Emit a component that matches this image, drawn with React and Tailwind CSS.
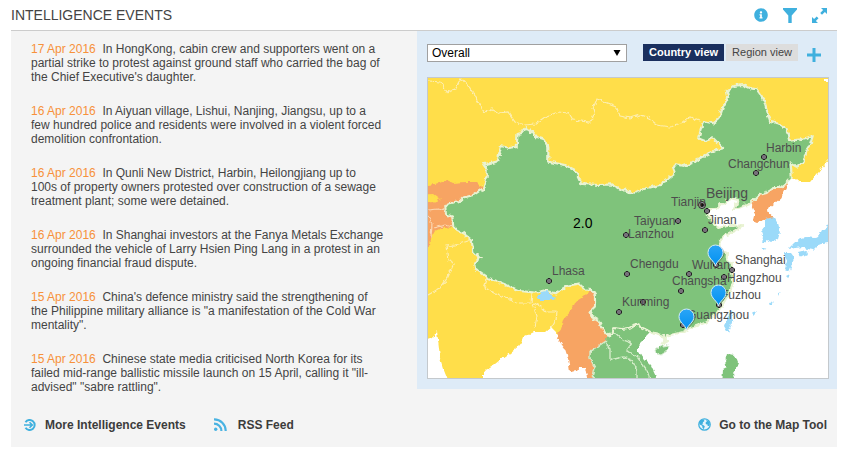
import { useState } from "react";
import { FaInfoCircle } from "react-icons/fa";

const EVENTS = [
    { date: "17 Apr 2016", text: "In HongKong, cabin crew and supporters went on a partial strike to protest against ground staff who carried the bag of the Chief Executive's daughter." },
    { date: "16 Apr 2016", text: "In Aiyuan village, Lishui, Nanjing, Jiangsu, up to a few hundred police and residents were involved in a violent forced demolition confrontation." },
    { date: "16 Apr 2016", text: "In Qunli New District, Harbin, Heilongjiang up to 100s\u00a0of property owners protested over construction of a sewage treatment plant; some were detained." },
    { date: "16 Apr 2016", text: "In Shanghai investors at the Fanya Metals Exchange surrounded the vehicle of Larry Hsien Ping Lang in a protest in an ongoing financial fraud dispute." },
    { date: "15 Apr 2016", text: "China's defence ministry said the strengthening of the Philippine military alliance is \"a manifestation of the Cold War mentality\"." },
    { date: "15 Apr 2016", text: "Chinese state media criticised North Korea for its failed mid-range ballistic missile launch on 15 April, calling it \"ill-advised\" \"sabre rattling\"." },
];

const CITIES = [
    { name: "Harbin", x: 766, y: 152 },
    { name: "Changchun", x: 728, y: 168 },
    { name: "Tianjin", x: 671, y: 206 },
    { name: "Jinan", x: 708, y: 224 },
    { name: "Taiyuan", x: 634, y: 225 },
    { name: "Lanzhou", x: 628, y: 238 },
    { name: "Chengdu", x: 630, y: 268 },
    { name: "Wuhan", x: 692, y: 269 },
    { name: "Shanghai", x: 735, y: 264 },
    { name: "Changsha", x: 672, y: 285 },
    { name: "Hangzhou", x: 727, y: 282 },
    { name: "Fuzhou", x: 721, y: 299 },
    { name: "Guangzhou", x: 687, y: 319 },
    { name: "Kunming", x: 622, y: 306 },
    { name: "Lhasa", x: 552, y: 275 },
];

const DOTS = [
    [764, 157], [756, 173], [707, 211], [705, 230], [678, 221], [626, 235],
    [627, 274], [549, 281], [619, 312], [643, 302], [681, 291], [689, 274],
    [732, 270], [724, 277], [719, 305], [683, 325], [716, 265],
];

const PINS = [[715.5, 266], [718.5, 306], [686.5, 330]];

const CHINA =
    "M526 127L521 133L517.5 134L516.7 147L509 148L501 146L497.3 161.7L483.3 164.3L486.7 169L486.7 177L483.3 188.3L473.3 195L463.3 197.7L460 201L448.3 203.3L445.3 207L446 214L452.3 216.7L453.3 227.7L463 233L471.7 240L473.3 251.7L480 258.3L474 262.3L475 268.3L488.3 277.7L506.7 285L520 291L535 292.7L544 290.7L556.7 293.3L566.7 286L580 283.3L583.3 289.3L591.7 290L595 295L595 305L590 315L598.3 320L601 326.7L608.3 335.7L613 333L613.3 328L622 329L630 327.7L635 324.3L643.3 328.3L650 331.7L662 335L664.7 340L661.7 344L667 341L666 336L683.3 332L690 328.3L706.7 322.3L716.7 313.3L723.3 303.3L730 291.7L733.3 281.7L731.7 270L732 264L726.7 258.3L727 253L720 250L719.3 242L724 236L738 229L743 225L733 226L727 226L718.3 228L714 223L708 215L707 209L716 209L721 204L726 203L730 198L738 200L736 205L734 209L742 207L751 203L759 195L766.7 193L773 188L780 188L785.7 183.3L791.7 177L790.7 163.3L796.7 166.7L803 163.3L806.7 150L810 145L812.7 136L801.7 139.3L789.3 140.7L786.7 130L780 124L770 121.7L766 108L763.3 98.3L756.7 89.3L750 88L743.3 85L733 86L726.7 91L728.3 97L723 107L719.3 118.3L713.3 123.3L703.3 121L698.3 138.3L705 141L713.3 138.3L717 142L723.3 148.3L713.3 151L705 155L691.7 163.3L684 166L675 164L673 168L675 173.3L668 179L660 185L647 188L633.3 192.7L620 189.3L611.7 184.3L600 185L581.7 184L575 170L565 165L548.3 161.7L548.3 147L543.3 139.3L536 137L531.7 131.7Z";

function RiskMap() {
    return (
        <svg viewBox="428 78 400 300" role="img" aria-label="Risk map of China" className="block w-full bg-white">
            <defs>
                <filter id="rough" x="0" y="0" width="1" height="1" colorInterpolationFilters="sRGB">
                    <feTurbulence type="fractalNoise" baseFrequency="0.22" numOctaves="2" seed="4" result="noise" />
                    <feDisplacementMap in="SourceGraphic" in2="noise" scale="5" xChannelSelector="R" yChannelSelector="G" />
                </filter>
                <linearGradient id="pin" x1="0" y1="0" x2="0" y2="1">
                    <stop offset="0" stopColor="#2aa5f7" />
                    <stop offset="1" stopColor="#0090f0" />
                </linearGradient>
            </defs>

            <g filter="url(#rough)">
                {/* keeps the filtered area larger than the visible one */}
                <rect x="418" y="68" width="420" height="320" fill="#fff" />

                {/* yellow: Russia, Mongolia, Kazakhstan, India */}
                <path fill="#ffde4a" d="M418 68H838V150L828 160L818 173L810 182L802 182L792 178L770 165L620 260L596 292L575 320L559 339L556 332L551 327L545 332L533 332L523 337L520 345L510 353L500 360L490 368L483 372L483 388H450L447 378L443 368L440 358L437 331L433 337L418 342Z" />

                {/* orange: Kyrgyzstan, Tajikistan, Myanmar, North Korea */}
                <path fill="#f7a463" d="M418 187L428 185L435 184L447 180L453 183L465 182L477 182L483 188L484 200L455 225L453 228L444 227L435 231L431 238L430 246L418 250Z" />
                <path fill="#ffde4a" d="M418 195L434 194L441 199L433 202L418 203Z" />
                <path fill="#f7a463" d="M590 290L600 295L610 335L606 341L597 347L590 351L591 358L595 368L592 388H589L585 367L580 367L577 371L570 372L568 358L565 349L557 338L563 320L571 311L575 302L583 297Z" />
                <path fill="#f7a463" d="M751 203L759 195L767 193L773 188L780 188L788 181L786 188L781 198L775 203L768 209L769 213L775 218L766 219L758 222L753 220L755 212Z" />

                {/* green: Vietnam, Laos, Thailand, Philippines, Hainan */}
                <path fill="#7fc37b" d="M606 341L608 333L614 326L645 326L650 333L644 339L638 345L638 351L644 359L651 366L657 379V388H592L595 368L590 358L591 351L597 347Z" />
                <path fill="#7fc37b" d="M727 354L735 355L738 363L735 370L733 373L735 388H722L723 369L727 367L725 361Z" />
                <path fill="#7fc37b" stroke="#d9edd3" d="M656 350L662 346L669 345L667 351L661 355L657 354Z" />

                {/* light blue: Korea, Japan, Taiwan */}
                <g fill="#9bdaf9">
                    <path d="M765 219L774 217L778 224L780 232L778 239L772 242L768 240L762 245L763 236L761 232L765 227Z" />
                    <path d="M784 253L791 253L794 257L792 265L789 272L785 269L787 261Z" />
                    <path d="M788 249L794 243L800 238L807 237L815 238L819 236L822 230L828 226L838 220V241L828 243L822 244L817 246L813 250L808 249L803 247L795 248Z" />
                    <path d="M798 252L806 250L808 254L800 258Z" />
                    <path d="M731 311L734 315L731 326L728 333L724 326L727 317Z" />
                    <path d="M761 248L766 247L764 250Z M786 276L790 274L788 278Z M769 305L773 300L772 304Z M752 313L757 312L754 315Z M778 293L781 291L779 295Z" />
                </g>

                <path fill="#7fc37b" stroke="#e9f3d3" strokeWidth="2.2" strokeLinejoin="round" d={CHINA} />
                {/* Bhutan */}
                <path fill="#9bdaf9" d="M537 297L541 292L546 291L550 294L555 297L554 300L546 300L539 300Z" />

                <g fill="none" stroke="#fdeeb0" strokeWidth="1.2">
                    <path d="M418 80L440 82L446 92L455 89L461 78L470 88L478 102L484 112L492 109L499 113L508 112L515 122L524 125L535 124L545 117L558 112L569 113L573 120L590 122L594 113L593 108L597 99L608 103L616 106L620 116L630 118L640 115L649 118L657 125L670 127L681 124L690 117L700 121" />
                    <path d="M471 240L462 243L455 245L446 246L448 260L454 263L448 277L440 288L428 295" />
                    <path d="M488 277L484 288L495 293L506 298L520 303L531 303L532 293" />
                    <path d="M532 302L540 306L546 312L557 312L556 320L552 327M533 304L537 316L535 328" />
                </g>
                <g fill="none" stroke="#fbd9b5" strokeWidth="1.2">
                    <path d="M428 210L438 209L446 211M428 216L432 224L431 238M434 228L446 225L453 227" />
                </g>
                <g fill="none" stroke="#d5ecc9" strokeWidth="1.4">
                    <path d="M606 341L597 347L590 351L590 358L595 368L593 378" />
                    <path d="M614 332L623 340L632 343L627 350L638 358L647 370L650 380" />
                    <path d="M606 342L610 350L610 360L623 357L632 360L637 370L637 380" />
                </g>
            </g>

            <path d="M824 79h4v3h-2v-1h-2z" fill="#fff" />

            <g fill="#77717a" stroke="#222" strokeWidth="1">
                {DOTS.map(([x, y]) => (
                    <path key={`${x}-${y}`} d={`M${x - 1} ${y - 2.5}h2l1.5 1.5v2l-1.5 1.5h-2l-1.5 -1.5v-2z`} />
                ))}
            </g>
            <circle cx="702" cy="205" r="3.5" fill="#aaa" stroke="#222" />
            <circle cx="702" cy="205" r="2" fill="#111" />

            <g fill="#4d4d4d" fontSize="12" fontFamily="Liberation Sans, Arial, sans-serif">
                {CITIES.map((city) => (
                    <text key={city.name} x={city.x} y={city.y}>{city.name}</text>
                ))}
                <text x="706" y="198" fontSize="14">Beijing</text>
                <text x="573" y="228" fontSize="14" fill="#000">2.0</text>
            </g>

            {PINS.map(([x, y]) => (
                <g key={x} transform={`translate(${x} ${y})`}>
                    <path d="M1 1C1 -4 9 -7 9 -13A7.5 7.5 0 0 0 2 -20Z" fill="#000" opacity="0.3" />
                    <path d="M0 0C-1 -5 -7.5 -7.5 -7.5 -13.5A7.5 7.5 0 0 1 7.5 -13.5C7.5 -7.5 1 -5 0 0Z" fill="url(#pin)" stroke="#d4ecf8" strokeWidth="1" />
                </g>
            ))}
        </svg>
    );
}

function FilterIcon() {
    return (
        <svg viewBox="0 0 14 15" className="w-3.5 h-[15px]" fill="#3fb0de">
            <path d="M0 0H14V1.5L8.7 7.5V15H5.3V7.5L0 1.5Z" />
        </svg>
    );
}

function ExpandIcon() {
    return (
        <svg viewBox="0 0 15 15" className="w-[15px] h-[15px]" fill="#3fb0de">
            <path d="M9 0H15V6L12.9 3.9L10 6.8L8.2 5L11.1 2.1ZM6 15H0V9L2.1 11.1L4.7 8.5L6.5 10.3L3.9 12.9Z" />
        </svg>
    );
}

function ArrowCircleIcon() {
    return (
        <svg viewBox="0 0 12 12" className="w-3 h-3" fill="none" stroke="#3fb0de">
            <path d="M1.5 3.2A5 5 0 1 1 1.5 8.8" strokeWidth="2" />
            <path d="M0 6H8M5.5 3.2L8.3 6L5.5 8.8" strokeWidth="1.6" />
        </svg>
    );
}

function RssIcon() {
    return (
        <svg viewBox="0 0 13 13" className="w-[13px] h-[13px]" fill="none" stroke="#4ab3e2" strokeWidth="2.2">
            <path d="M0 1.3A11.5 11.5 0 0 1 11.7 13M0 5.6A7.4 7.4 0 0 1 7.4 13" />
            <circle cx="1.7" cy="11.3" r="1.7" fill="#4ab3e2" stroke="none" />
        </svg>
    );
}

function GlobeIcon() {
    return (
        <svg viewBox="0 0 13 13" className="w-[13px] h-[13px]">
            <circle cx="6.5" cy="6.5" r="5.7" fill="#e6f4fb" stroke="#3fb0de" strokeWidth="1.3" />
            <path fill="#3fb0de" d="M1.2 4L3 2L6 1.5L6.3 3.2L4.8 4.2L5.2 5.5L3.6 6L5.5 7.2L6.8 8.2L5.8 11.3L4.4 9.5L4.2 7.8L1.6 6.5ZM8 1.8L11 3.4L11.8 6.4L11 8L9.7 8L9.5 6.5L8 6.3L7.5 4.8L8.8 3.6Z" />
        </svg>
    );
}

export default function App() {
    const [indicator, setIndicator] = useState("Overall");
    const [view, setView] = useState("country");

    return (
        <div className="min-h-screen bg-white pl-[11px] pr-[15px] font-['Liberation_Sans',Arial,sans-serif] text-xs text-[#444]">
            {/* HEADER */}
            <header className="flex items-center justify-between h-[31px] border-b border-[#ccc] pr-2.5">
                <h1 className="text-sm">INTELLIGENCE EVENTS</h1>
                <div className="flex items-center gap-[15px] text-[#3fb0de]">
                    <button aria-label="Information"><FaInfoCircle size={14} /></button>
                    <button aria-label="Filter"><FilterIcon /></button>
                    <button aria-label="Expand"><ExpandIcon /></button>
                </div>
            </header>

            <main className="grid grid-cols-[406fr_420fr] items-start bg-[#f4f4f4]">
                {/* EVENTS */}
                <ul className="min-w-0 flex flex-col gap-5 pl-5 pr-[31px] pt-[11px] leading-[14px]">
                    {EVENTS.map((event) => (
                        <li key={event.text}>
                            <span className="text-[#f7913a]">{event.date}</span>
                            {"\u00a0 "}
                            {event.text}
                        </li>
                    ))}
                </ul>

                {/* MAP */}
                <section className="min-w-0 bg-[#deebf7] pl-2.5 pr-2 pt-[13px] pb-2.5">
                    <div className="flex items-start mb-[15px]">
                        <div className="relative w-[200px]">
                            <select
                                aria-label="Indicator"
                                value={indicator}
                                onChange={(e) => setIndicator(e.target.value)}
                                className="block w-full h-[18px] appearance-none border border-[#a0a0a0] bg-white pl-1 text-xs leading-4 text-black"
                            >
                                <option>Overall</option>
                            </select>
                            <svg viewBox="0 0 8 6" className="absolute right-1.5 top-1.5 w-2 h-1.5 pointer-events-none">
                                <path d="M0.5 0H7.5L4 6Z" fill="#000" />
                            </svg>
                        </div>
                        <div className="flex gap-0.5 ml-auto text-[11px] leading-[14px] whitespace-nowrap">
                            <button
                                onClick={() => setView("country")}
                                className={`h-[17px] px-1.5 pb-0.5 ${view === "country" ? "bg-[#1a2f5e] text-white font-bold" : "bg-[#dddddd]"}`}
                            >
                                Country view
                            </button>
                            <button
                                onClick={() => setView("region")}
                                className={`h-[17px] px-1.5 pb-0.5 ${view === "region" ? "bg-[#1a2f5e] text-white font-bold" : "bg-[#dddddd]"}`}
                            >
                                Region view
                            </button>
                        </div>
                        <button aria-label="Add" className="ml-[9px] mr-2 mt-1">
                            <svg viewBox="0 0 14 14" className="w-3.5 h-3.5">
                                <path d="M7 0V14M0 7H14" stroke="#3fb0de" strokeWidth="3" />
                            </svg>
                        </button>
                    </div>
                    <div className="border border-[#c4c9cd]">
                        <RiskMap />
                    </div>
                </section>
            </main>

            {/* FOOTER */}
            <footer className="flex items-center h-[53px] bg-[#f4f4f4] pl-[13px] pr-2.5 pt-2 font-bold text-[#3c3c3c]">
                <a href="#events" className="flex items-center gap-[9px]">
                    <ArrowCircleIcon />
                    More Intelligence Events
                </a>
                <a href="#rss" className="flex items-center gap-[11px] ml-7">
                    <RssIcon />
                    RSS Feed
                </a>
                <a href="#map" className="flex items-center gap-2 ml-auto">
                    <GlobeIcon />
                    Go to the Map Tool
                </a>
            </footer>
        </div>
    );
}
